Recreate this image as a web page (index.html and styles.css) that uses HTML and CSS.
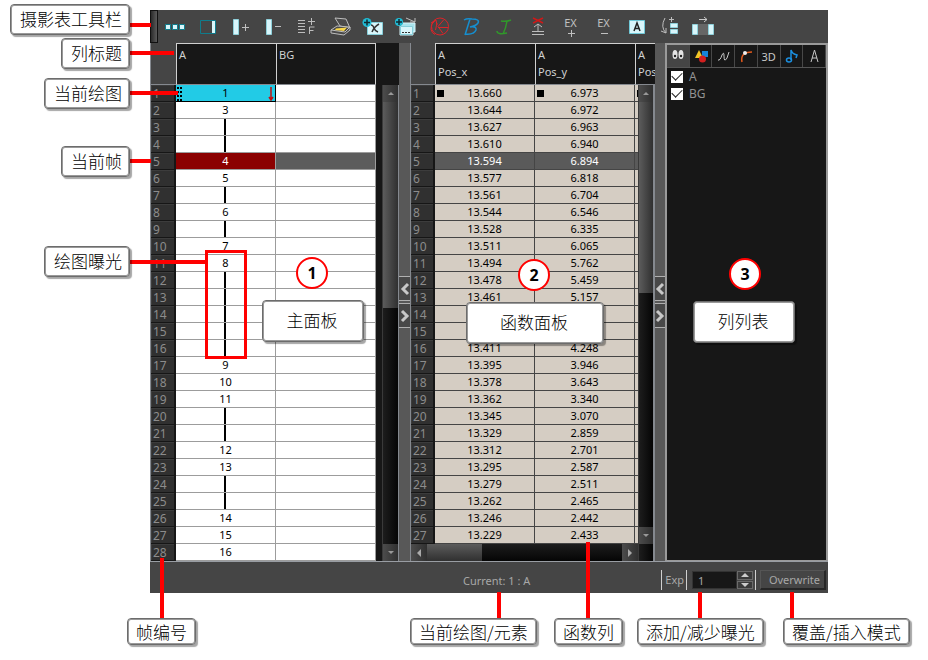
FILE: index.html
```html
<!DOCTYPE html>
<html lang="zh-CN">
<head>
<meta charset="utf-8">
<meta name="viewport" content="width=device-width, initial-scale=1">
<title>摄影表</title>
<link rel="stylesheet" href="styles.css">
</head>
<body>
<main class="figure">
  <section class="app" lang="en">
    <div class="toolbar" role="toolbar" aria-label="Xsheet">
      <span class="handle"></span>
      <button class="tool" aria-label="Thumbnails"><svg viewBox="0 0 28 24"><g fill="#d9f6fb" stroke="#0f7c8c"><path d="M4.500 9.500h5v5h-5zM11.500 9.500h5v5h-5zM18.500 9.500h5v5h-5z"/></g></svg></button>
      <button class="tool" aria-label="Column list"><svg viewBox="0 0 28 24"><path d="M6.500 5.500h15v13h-15z" fill="none" stroke="#0f7c8c"/><path d="M18 6h3v12h-3z" fill="#d9f6fb"/></svg></button>
      <button class="tool" aria-label="Add column"><svg viewBox="0 0 28 24"><path d="M6.500 4.500h5v15h-5z" fill="#d9f6fb" stroke="#8ed0da"/><path d="M15 12.500h7M18.500 9v7" stroke="#c0c0c0" fill="none"/></svg></button>
      <button class="tool" aria-label="Delete column"><svg viewBox="0 0 28 24"><path d="M6.500 4.500h5v15h-5z" fill="#d9f6fb" stroke="#8ed0da"/><path d="M15 11.500h6" stroke="#c0c0c0"/></svg></button>
      <button class="tool" aria-label="Function columns"><svg viewBox="0 0 28 24"><path d="M5 5.500h7M5 8.500h7M5 11.500h7M5 14.500h7M5 17.500h7M15 6.500h7M18.500 3v7M16.500 19v-7h5M16.500 15.500h4" stroke="#bdbdbd" fill="none"/></svg></button>
      <button class="tool" aria-label="Import images"><svg viewBox="0 0 28 24"><path d="M9 3l11 1 4 9-10-2z" fill="#4a4a4a" stroke="#bdbdbd"/><path d="M5 15l6-4 13 1-5 5zM5 15v3l13 2 6-5v-3" fill="#4a4a4a" stroke="#bdbdbd"/><path d="M10 13.500l11-1-3 3.500-9-1z" fill="#f8d648"/></svg></button>
      <button class="tool" aria-label="Create empty drawing"><svg viewBox="0 0 28 24"><path d="M8.500 7.500h15v12h-15z" fill="#d9f6fb" stroke="#87cfda"/><path d="M12 10q2 0 3 3t4 4M20 9q-5 3-7 8" stroke="#333" stroke-width="1.500" fill="none"/><circle cx="8" cy="7.500" r="4.500" fill="#20bbd4"/><path d="M5 7.500h6M8 4.500v6" stroke="#102a30" stroke-width="1.500"/></svg></button>
      <button class="tool" aria-label="Duplicate drawing"><svg viewBox="0 0 28 24"><path d="M11 8h12v9h-2v3H8v-9" fill="#a9e4ed" stroke="#d9f6fb"/><path d="M8.500 11.500h12v8h-12z" fill="#d9f6fb" stroke="#87cfda"/><path d="M10 17.500h9" stroke="#333" stroke-dasharray="2 1"/><path d="M14 3l9 4M23 3v4h-5" stroke="#bdbdbd" fill="none"/><circle cx="7" cy="7" r="4" fill="#20bbd4"/><path d="M4 7h6M7 4v6" stroke="#102a30" stroke-width="1.500"/></svg></button>
      <button class="tool" aria-label="Ease velocity"><svg viewBox="0 0 28 24"><circle cx="15" cy="11.500" r="8.500" fill="none" stroke="#dc2429"/><path d="M10 5.500q-5 4-4 9 1 4 4 5M6 8l5-3 1 5M12 8l-1.500 7M19 4.500l-6 7 5 7M13 12.500h10" fill="none" stroke="#dc2429"/></svg></button>
      <button class="tool" aria-label="Bezier"><svg viewBox="0 0 28 24"><path d="M6 5q3-2 8-1 8 0 6 4-2 3-8 4 7-1 6 3-2 5-11 4M12 4L7 20" fill="none" stroke="#168fd0" stroke-width="1.500"/></svg></button>
      <button class="tool" aria-label="Interpolate"><svg viewBox="0 0 28 24"><path d="M10 6q5 1 10-1M16 6q-1 7-4 13M6 16q0 4 10 2" fill="none" stroke="#30982a" stroke-width="1.500"/></svg></button>
      <button class="tool" aria-label="Remove keyframe"><svg viewBox="0 0 28 24"><path d="M9 3l10 5M19 3L9 8" stroke="#d01818" stroke-width="1.500"/><path d="M14 17V9M10 12l4-3 4 3M8 16.500h12M8 19.500h12" stroke="#bdbdbd" fill="none"/></svg></button>
      <button class="tool tool-text" aria-label="Increase exposure">EX<svg viewBox="0 0 8 8"><path d="M1 4.500h7M4.500 1v7"/></svg></button>
      <button class="tool tool-text" aria-label="Decrease exposure">EX<svg viewBox="0 0 8 8"><path d="M1 4.500h7"/></svg></button>
      <button class="tool" aria-label="Hold exposure"><svg viewBox="0 0 28 24"><path d="M6.500 5.500h15v13h-15z" fill="#d9f6fb" stroke="#70c9d8"/><path d="M11 16l3-8 3 8M12 13.500h4" stroke="#222" stroke-width="1.500" fill="none"/></svg></button>
      <button class="tool" aria-label="Insert cells"><svg viewBox="0 0 28 24"><path d="M14.500 8.500h7v4h-7zM14.500 14.500h7v4h-7z" fill="#d9f6fb" stroke="#8ed0da"/><path d="M9 3q-5 9 1 15M5 16l5 2v-5M13 4.500h5M15.500 2v5" stroke="#bdbdbd" fill="none"/></svg></button>
      <button class="tool" aria-label="Move columns"><svg viewBox="0 0 28 24"><path d="M9 9h10v11H9z" fill="#666"/><path d="M3.500 9.500h5v10h-5zM19.500 9.500h5v10h-5z" fill="#d9f6fb" stroke="#8ed0da"/><path d="M10 4.500h8M15 2l3 2.500L15 7" stroke="#c8c8c8" fill="none"/></svg></button>
    </div>

    <div class="panels">
      <section class="sheet sheet-main">
        <table class="grid-table" aria-label="主面板">
          <colgroup><col class="col-frame"><col class="col-data"><col class="col-data"></colgroup>
          <thead><tr><td class="corner"></td><th scope="col">A</th><th scope="col" class="last">BG</th></tr></thead>
          <tbody id="main-rows"></tbody>
        </table>
        <div class="vscroll"><span class="arrow up"></span><span class="thumb thumb-main"></span><span class="arrow down"></span></div>
      </section>

      <div class="splitter"><button aria-label="Collapse left"><svg viewBox="0 0 10 14"><path d="M8 2L3 7l5 5"/></svg></button><button aria-label="Collapse right"><svg viewBox="0 0 10 14"><path d="M2 2l5 5-5 5"/></svg></button></div>

      <section class="sheet sheet-func">
        <table class="grid-table" aria-label="函数面板">
          <colgroup><col class="col-frame"><col class="col-data"><col class="col-data"><col class="col-next"></colgroup>
          <thead><tr><td class="corner"></td><th scope="col">A<br>Pos_x</th><th scope="col">A<br>Pos_y</th><th scope="col">A<br>Pos</th></tr></thead>
          <tbody id="func-rows"></tbody>
        </table>
        <div class="vscroll"><span class="arrow up"></span><span class="thumb thumb-func"></span><span class="arrow down"></span></div>
        <div class="hscroll"><span class="arrow left"></span><span class="thumb-h"></span><span class="arrow right"></span></div>
      </section>

      <div class="splitter"><button aria-label="Collapse left"><svg viewBox="0 0 10 14"><path d="M8 2L3 7l5 5"/></svg></button><button aria-label="Collapse right"><svg viewBox="0 0 10 14"><path d="M2 2l5 5-5 5"/></svg></button></div>

      <section class="list">
        <div class="tabs">
          <button class="tab active" aria-label="All"><svg viewBox="0 0 20 20"><g fill="#e4e4e4"><ellipse cx="7" cy="8.500" rx="2.500" ry="4.500"/><ellipse cx="13" cy="8.500" rx="2.500" ry="4.500"/></g><circle cx="7" cy="10" r="1.200" fill="#222"/><circle cx="13" cy="10" r="1.200" fill="#222"/></svg></button>
          <button class="tab" aria-label="Drawings"><svg viewBox="0 0 20 20"><path d="M11 5h6v6h-6z" fill="#1684d8"/><path d="M8 4l4 8H4z" fill="#f0c526"/><circle cx="11.500" cy="13" r="3.500" fill="#d31f1f"/></svg></button>
          <button class="tab" aria-label="Functions"><svg viewBox="0 0 20 20"><path d="M5 14q2 1 4-5 2-4 2 1 0 7 3 2l2-6" fill="none" stroke="#c8c8c8"/></svg></button>
          <button class="tab" aria-label="Paths"><svg viewBox="0 0 20 20"><path d="M6 16q-2-10 10-10" fill="none" stroke="#e2591b" stroke-width="1.500"/><circle cx="9" cy="7" r="2" fill="#eee"/></svg></button>
          <button class="tab" aria-label="3D paths">3D</button>
          <button class="tab" aria-label="Sound"><svg viewBox="0 0 20 20"><path d="M10 14V4q1 4 6 5l-1 3" fill="none" stroke="#1b8fe0" stroke-width="1.500"/><ellipse cx="8" cy="14" rx="2.500" ry="2" fill="none" stroke="#1b8fe0" stroke-width="1.500"/></svg></button>
          <button class="tab" aria-label="Annotations"><svg viewBox="0 0 20 20"><path d="M7 16l3.500-12L14 16M8 12h5" fill="none" stroke="#c8c8c8"/></svg></button>
        </div>
        <label class="item"><input type="checkbox" checked>A</label>
        <label class="item"><input type="checkbox" checked>BG</label>
      </section>
    </div>

    <footer class="status">
      <span class="current">Current: 1 : A</span>
      <label class="exp" for="exposure">Exp</label>
      <div class="spin">
        <input id="exposure" type="text" value="1">
        <div class="steps"><button class="up" aria-label="Increase"></button><button class="down" aria-label="Decrease"></button></div>
      </div>
      <button class="mode">Overwrite</button>
    </footer>
  </section>

  <span class="lead h toolbar-lead"></span>
  <span class="lead h header-lead"></span>
  <span class="lead h drawing-lead"></span>
  <span class="lead h frame-lead"></span>
  <span class="lead h exposure-lead"></span>
  <span class="exposure-frame"></span>
  <span class="lead v number-lead"></span>
  <span class="lead v current-lead"></span>
  <span class="lead v column-lead"></span>
  <span class="lead v add-lead"></span>
  <span class="lead v mode-lead"></span>

  <span class="callout side toolbar-note">摄影表工具栏</span>
  <span class="callout side header-note">列标题</span>
  <span class="callout side drawing-note">当前绘图</span>
  <span class="callout side frame-note">当前帧</span>
  <span class="callout side exposure-note">绘图曝光</span>
  <span class="callout foot number-note">帧编号</span>
  <span class="callout foot current-note">当前绘图/元素</span>
  <span class="callout foot column-note">函数列</span>
  <span class="callout foot add-note">添加/减少曝光</span>
  <span class="callout foot mode-note">覆盖/插入模式</span>

  <span class="badge badge-main">1</span>
  <span class="badge badge-func">2</span>
  <span class="badge badge-list">3</span>
  <span class="callout panel main-note">主面板</span>
  <span class="callout panel func-note">函数面板</span>
  <span class="callout panel list-note">列列表</span>
</main>
<script src="sheet.js"></script>
</body>
</html>
```
FILE: styles.css
```css
* { box-sizing: border-box; }
body { margin: 0; background: #fff; font-family: "Noto Sans", sans-serif; font-size: 11px; }
button, input { font: inherit; color: inherit; padding: 0; margin: 0; border: 0; background: none; }
svg { display: block; }

.figure { position: relative; padding: 10px 100px 67px 150px; }
.app { background: #454545; color: #a8a8a8; }

/* toolbar */
.toolbar { display: flex; height: 33px; overflow: hidden; }
.handle { width: 8px; border: 1px solid #111; background: linear-gradient(90deg, #2a2a2a, #5a5a5a); }
.tool { width: 33px; display: flex; align-items: center; justify-content: center; }
.tool svg { width: 28px; height: 24px; }
.tool-text { flex-direction: column; line-height: 12px; color: #c0c0c0; }
.tool-text svg { width: 8px; height: 8px; fill: none; stroke: #c0c0c0; }

/* panels */
.panels { display: grid; grid-template-columns: minmax(0, 249fr) 11px minmax(0, 245fr) 10px minmax(0, 163fr); border-bottom: 1px solid #999da3; }
.sheet { display: grid; grid-template-rows: 42px 1fr auto; background: #171717; overflow: hidden; border-left: 1px solid #85898f; }
.sheet-main { grid-template-columns: minmax(0, 1fr) 17px; }
.sheet-func { grid-template-columns: minmax(0, 1fr) 17px; }
.grid-table { grid-area: 1 / 1 / 3 / 3; table-layout: fixed; border-collapse: separate; border-spacing: 0; width: 0; }
.col-frame { width: 25px; }
.sheet-func .col-frame { width: 24px; }
.col-data { width: 100px; }
.col-next { width: 24px; }
.grid-table thead tr { height: 42px; }
.corner { background: #454545; border-bottom: 1px solid #85898f; padding: 0; }
.grid-table thead th { padding: 2px 0 0 2px; text-align: left; vertical-align: top; font-weight: 400; line-height: 17px; color: #d0d0d0; background: #171717; border: solid #d0d0d0; border-width: 1px 0 0 1px; border-bottom: 1px solid #85898f; }
.grid-table thead th.last { border-right: 1px solid #d0d0d0; }
.grid-table tbody tr { height: 17px; }
.grid-table tbody th { height: 17px; padding: 0 0 0 2px; font-size: 12px; line-height: 15px; text-align: left; font-weight: 400; color: #8c8c8c; background: #303030; border: solid #161616; border-width: 0 2px 1px 0; box-shadow: inset 1px 1px #3c3c3c; }
.grid-table tbody td { padding: 0; line-height: 16px; text-align: center; color: #000; background: #fff; border: solid #9c9c9c; border-width: 0 1px 1px 0; }
.grid-table .held { background: linear-gradient(#000, #000) 48px 0 / 2px 100% no-repeat #fff; }
.grid-table .drawing { background: #22cbe6; border-color: #000; }
.cell-row { display: flex; justify-content: space-between; align-items: center; height: 16px; }
.cell-row svg { width: 8px; height: 15px; }
.grid-table .now td { background: #5c5c5c; }
.grid-table .now td.has-drawing { background: #8b0000; color: #fff; }
.sheet-func .grid-table tbody td { background: #d5cdc3; border-color: #454545; }
.sheet-func .grid-table tbody tr.now td { background: #5a5a5a; color: #fff; }
.sheet-func .grid-table tbody .key { background: linear-gradient(#000, #000) 2px 5px / 7px 7px no-repeat #d5cdc3; }

/* scroll bars */
.vscroll { grid-area: 2 / 2; z-index: 1; display: flex; flex-direction: column; background: linear-gradient(90deg, #1d1d1d, #050505); border: solid #3a3a3a; border-width: 0 1px; border-right-color: #85898f; }
.sheet-func .vscroll { grid-row: 2 / 4; border-right-width: 2px; }
.sheet-func .vscroll .arrow.down { margin-bottom: 17px; }
.thumb { background: linear-gradient(90deg, #5c5c5c, #303030); }
.thumb-main { height: 206px; }
.thumb-func { height: 191px; }
.arrow { display: grid; place-items: center; height: 17px; background: linear-gradient(90deg, #4c4c4c, #303030); }
.arrow::before { content: ""; border: 3px solid transparent; }
.arrow.up::before { border-top: 0; border-bottom-color: #999; }
.arrow.down::before { border-bottom: 0; border-top-color: #999; }
.arrow.down { margin-top: auto; }
.hscroll { grid-area: 3 / 1 / 4 / 2; display: flex; height: 17px; background: linear-gradient(#1d1d1d, #050505); }
.hscroll .arrow { width: 16px; height: 17px; }
.arrow.left::before { border: 4px solid transparent; border-left: 0; border-right-color: #aaa; }
.arrow.right::before { border: 4px solid transparent; border-right: 0; border-left-color: #aaa; }
.arrow.right { margin-left: auto; }
.thumb-h { width: 55px; background: linear-gradient(#5c5c5c, #303030); }

.splitter { display: flex; flex-direction: column; justify-content: center; gap: 2px; background: #585858; }
.splitter button { height: 25px; display: grid; place-items: center; background: #484848; border: solid #b0b0b0; border-width: 1px 0; }
.splitter svg { width: 10px; height: 14px; fill: none; stroke: #c8c8c8; stroke-width: 3; }

/* column list */
.list { background: #171717; border: 2px solid #9a9a9a; border-width: 2px 2px 1px; }
.tabs { display: flex; height: 23px; border-bottom: 1px solid #555; }
.tab { flex: 1; display: grid; place-items: center; color: #c8c8c8; border-right: 1px solid #484848; }
.tab.active { background: #454545; }
.tab svg { width: 20px; height: 20px; }
.item { display: flex; align-items: center; gap: 6px; height: 17px; padding-left: 4px; font-size: 12px; color: #929292; }
.item input { appearance: none; width: 12px; height: 12px; background: #fff; display: grid; place-items: center; }
.item input:checked::before { content: ""; width: 9px; height: 5px; margin-bottom: 3px; border: solid #222; border-width: 0 0 1px 1px; transform: rotate(-45deg); }

/* status bar */
.status { display: grid; grid-template-columns: minmax(0, 1fr) auto auto 66px; align-items: center; height: 31px; padding: 5px 2px 0 0; }
.current { text-align: center; padding-left: 182px; }
.exp { border: solid #d0d0d0; border-width: 0 1px; padding: 0 2px 0 3px; line-height: 20px; }
.spin { display: flex; height: 20px; padding: 1px 2px 1px 5px; margin-right: 4px; border-right: 1px solid #d0d0d0; }
.spin input { width: 45px; height: 18px; padding-left: 5px; background: #171717; border: 1px solid #333; }
.steps { display: grid; width: 16px; height: 18px; gap: 1px; }
.steps button { display: grid; place-items: center; background: #3a3a3a; border: 1px solid #6a6a6a; }
.steps button::before { content: ""; border: 4px solid transparent; }
.steps .up::before { border-top: 0; border-bottom-color: #ccc; }
.steps .down::before { border-bottom: 0; border-top-color: #ccc; }
.mode { height: 20px; padding-left: 4px; border: solid; border-width: 1px 2px 2px 1px; border-color: #555 #262626 #262626 #555; }

/* annotations laid over the window */
.callout { position: absolute; display: flex; align-items: center; justify-content: center; white-space: nowrap; color: #000; background: #fff; border: 1px solid #6c6c6c; border-radius: 4px; box-shadow: 2px 2px 1px rgba(0, 0, 0, .35), inset 0 0 0 1px #999; font: 300 17px "Noto Sans CJK SC", sans-serif; }
.callout.side { right: calc(100% - 130px); height: 31px; padding: 0 7px 2px 9px; }
.callout.foot { top: 618px; height: 27px; padding: 0 8px; }
.callout.panel { height: 42px; padding: 0 2px 4px 0; }
.toolbar-note { top: 4px; }
.header-note { top: 38px; }
.drawing-note { top: 78px; }
.frame-note { top: 146px; }
.exposure-note { top: 246px; }
.number-note { left: 127px; }
.current-note { left: 410px; }
.column-note { left: 554px; }
.add-note { left: 637px; }
.mode-note { left: 783px; }
.main-note { left: 262px; top: 300px; width: 102px; }
.func-note { left: 466px; top: 302px; width: 138px; }
.list-note { left: 693px; top: 301px; width: 102px; }

.lead { position: absolute; background: #f00; }
.lead.h { left: 129px; height: 4px; }
.lead.v { width: 4px; }
.toolbar-lead { top: 23px; width: 22px; }
.header-lead { top: 51px; width: 45px; }
.drawing-lead { top: 91px; width: 49px; }
.frame-lead { top: 159px; width: 22px; }
.exposure-lead { top: 260px; width: 77px; }
.number-lead { left: 160px; top: 558px; height: 60px; }
.current-lead { left: 497px; top: 592px; height: 26px; }
.column-lead { left: 586px; top: 542px; height: 76px; }
.add-lead { left: 698px; top: 592px; height: 26px; }
.mode-lead { left: 790px; top: 592px; height: 26px; }
.exposure-frame { position: absolute; left: 205px; top: 250px; width: 42px; height: 109px; border: 3px solid #f00; }

.badge { position: absolute; width: 32px; height: 32px; border: 2px solid #f00; border-radius: 50%; background: #fff; color: #000; font-size: 16px; font-weight: 700; line-height: 28px; text-align: center; }
.badge-main { left: 296px; top: 257px; }
.badge-func { left: 518px; top: 259px; }
.badge-list { left: 729px; top: 258px; }
```
FILE: sheet.js
```js
// null marks a frame on which the previous drawing is held.
const drawings = [1, 3, null, null, 4, 5, null, 6, null, 7, 8, null, null, null, null, null,
  9, 10, 11, null, null, 12, 13, null, null, 14, 15, 16];

const positions = [
  ["13.660", "6.973"], ["13.644", "6.972"], ["13.627", "6.963"], ["13.610", "6.940"],
  ["13.594", "6.894"], ["13.577", "6.818"], ["13.561", "6.704"], ["13.544", "6.546"],
  ["13.528", "6.335"], ["13.511", "6.065"], ["13.494", "5.762"], ["13.478", "5.459"],
  ["13.461", "5.157"], ["", ""], ["", ""], ["13.411", "4.248"],
  ["13.395", "3.946"], ["13.378", "3.643"], ["13.362", "3.340"], ["13.345", "3.070"],
  ["13.329", "2.859"], ["13.312", "2.701"], ["13.295", "2.587"], ["13.279", "2.511"],
  ["13.262", "2.465"], ["13.246", "2.442"], ["13.229", "2.433"]
];

const currentFrame = 5;
const rowTag = frame => `<tr${frame === currentFrame ? ' class="now"' : ""}><th scope="row">${frame}</th>`;

const selected = `<td class="drawing"><div class="cell-row">
  <svg viewBox="0 0 8 15"><path d="M2 1v14M5 1v14" stroke="#000" stroke-width="2" stroke-dasharray="2 2"/></svg>
  <span>1</span>
  <svg viewBox="0 0 8 15"><path d="M4 1v13M2 11l2 3 2-3" stroke="#c01010" stroke-width="1.5" fill="none"/></svg></div></td>`;

document.getElementById("main-rows").innerHTML = drawings.map((drawing, i) => {
  const cell = i === 0 ? selected
    : drawing === null ? '<td class="held"></td>'
    : `<td class="has-drawing">${drawing}</td>`;
  return `${rowTag(i + 1)}${cell}<td></td></tr>`;
}).join("");

document.getElementById("func-rows").innerHTML = positions.map(([x, y], i) => {
  const key = i === 0 ? ' class="key"' : "";
  return `${rowTag(i + 1)}<td${key}>${x}</td><td${key}>${y}</td><td${key}></td></tr>`;
}).join("");
```
